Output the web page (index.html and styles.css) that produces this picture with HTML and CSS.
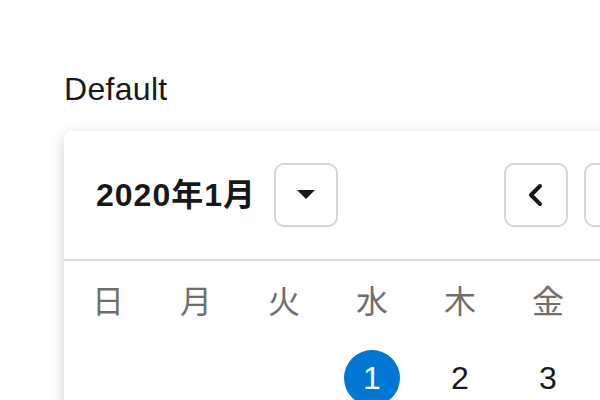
FILE: index.html
```html
<!DOCTYPE html>
<html lang="ja">
<head>
    <meta charset="UTF-8">
    <meta name="viewport" content="width=device-width, initial-scale=1.0">
    <title>Datepicker</title>
    <link rel="stylesheet" href="styles.css">
</head>
<body>
    <div class="page">
        <div class="label">Default</div>

        <div class="datepicker">
            <div class="dp-header">
                <div class="dp-title">
                    <h2 class="month">2020年1月</h2>
                    <button class="icon-btn" title="年月を選択">
                        <svg width="18" height="10" viewBox="0 0 18 10"><polygon points="0,0 18,0 9,9" fill="#181818"/></svg>
                    </button>
                </div>
                <div class="dp-nav">
                    <button class="icon-btn" title="前の月">
                        <svg width="18" height="24" viewBox="0 0 18 24"><polyline points="13,3 4,12 13,21" fill="none" stroke="#181818" stroke-width="4" stroke-linecap="round" stroke-linejoin="round"/></svg>
                    </button>
                    <button class="icon-btn" title="次の月">
                        <svg width="18" height="24" viewBox="0 0 18 24"><polyline points="5,3 14,12 5,21" fill="none" stroke="#181818" stroke-width="4" stroke-linecap="round" stroke-linejoin="round"/></svg>
                    </button>
                </div>
            </div>

            <div class="dp-grid">
                <div class="weekday">日</div>
                <div class="weekday">月</div>
                <div class="weekday">火</div>
                <div class="weekday">水</div>
                <div class="weekday">木</div>
                <div class="weekday">金</div>
                <div class="weekday">土</div>

                <div class="day"></div>
                <div class="day"></div>
                <div class="day"></div>
                <div class="day selected"><span>1</span></div>
                <div class="day"><span>2</span></div>
                <div class="day"><span>3</span></div>
                <div class="day"><span>4</span></div>
            </div>
        </div>
    </div>
</body>
</html>
```

FILE: styles.css
```css
html, body {
    margin: 0;
    overflow: hidden;
    background-color: #fff;
}
body {
    font-family: "Liberation Sans", "Noto Sans CJK JP", sans-serif;
    font-size: 32px;
    color: #181818;
}
.page {
    padding: 65px 0 0 64px;
}
.label {
    line-height: 48px;
    letter-spacing: 0.3px;
    margin-bottom: 18px;
}
.datepicker {
    width: 616px;
    background-color: #fff;
    border-radius: 8px;
    box-shadow: 0 4px 14px rgba(0,0,0,0.2);
}
.dp-header {
    display: flex;
    justify-content: space-between;
    align-items: center;
    padding: 32px;
    border-bottom: 2px solid #dddbda;
}
.dp-title {
    display: flex;
    align-items: center;
    gap: 18px;
}
.month {
    margin: 0;
    font-size: 32px;
    font-weight: bold;
    line-height: 64px;
    letter-spacing: 1px;
}
.icon-btn {
    box-sizing: border-box;
    width: 64px;
    height: 64px;
    padding: 0;
    border: 2px solid #d8d6d3;
    border-radius: 10px;
    background-color: #fff;
    display: flex;
    align-items: center;
    justify-content: center;
}
.dp-nav {
    display: flex;
    gap: 16px;
}
.dp-grid {
    display: grid;
    grid-template-columns: repeat(7, 88px);
    padding-top: 9px;
    row-gap: 12px;
}
.weekday {
    height: 64px;
    line-height: 64px;
    text-align: center;
    color: #706e6b;
}
.day {
    height: 64px;
    display: flex;
    align-items: center;
    justify-content: center;
}
.day span {
    width: 56px;
    height: 56px;
    border-radius: 50%;
    display: flex;
    align-items: center;
    justify-content: center;
}
.day.selected span {
    background-color: #0176d3;
    color: #fff;
}
```
